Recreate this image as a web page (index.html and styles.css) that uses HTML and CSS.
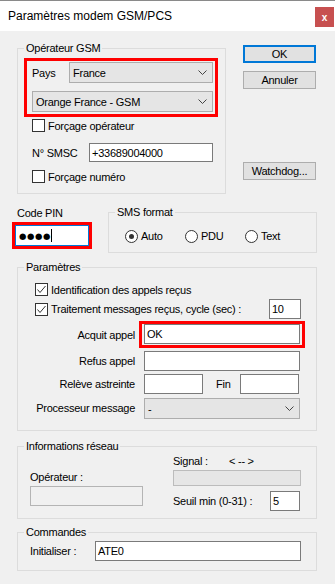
FILE: index.html
```html
<!DOCTYPE html>
<html lang="fr">
<head>
<meta charset="utf-8">
<title>Paramètres modem GSM/PCS</title>
<link rel="stylesheet" href="styles.css">
</head>
<body>
<div class="window">
  <div class="titlebar">
    <span class="title">Paramètres modem GSM/PCS</span>
    <span class="close">x</span>
  </div>
  <div class="content">
    <div class="row1">
      <fieldset class="grp gsm">
        <legend>Opérateur GSM</legend>
        <div class="gbody gsm-body">
          <div class="hl hl-gsm">
            <div class="pays-row">
              <span class="pays-label">Pays</span>
              <div class="select sel-pays"><span>France</span><svg class="chev" width="9" height="5" viewBox="0 0 9 5"><polyline points="0.5,0.5 4.5,4.5 8.5,0.5" fill="none" stroke="#444" stroke-width="1"/></svg></div>
            </div>
            <div class="select sel-op"><span>Orange France - GSM</span><svg class="chev" width="9" height="5" viewBox="0 0 9 5"><polyline points="0.5,0.5 4.5,4.5 8.5,0.5" fill="none" stroke="#444" stroke-width="1"/></svg></div>
          </div>
          <div class="check-row cr-op"><span class="cb"></span><span>Forçage opérateur</span></div>
          <div class="smsc-row"><span class="smsc-label">N° SMSC</span><div class="input in-smsc">+33689004000</div></div>
          <div class="check-row cr-num"><span class="cb"></span><span>Forçage numéro</span></div>
        </div>
      </fieldset>
      <div class="btns">
        <div class="btn btn-ok">OK</div>
        <div class="btn btn-cancel">Annuler</div>
        <div class="btn btn-watch">Watchdog...</div>
      </div>
    </div>

    <div class="row2">
      <div class="pin">
        <div class="pin-label">Code PIN</div>
        <div class="hl hl-pin">
          <div class="pin-input"><span class="dots">●●●●</span><span class="caret"></span></div>
        </div>
      </div>
      <fieldset class="grp sms">
        <legend>SMS format</legend>
        <div class="gbody sms-body">
          <div class="radio"><span class="rb on"></span><span>Auto</span></div>
          <div class="radio"><span class="rb"></span><span>PDU</span></div>
          <div class="radio"><span class="rb"></span><span>Text</span></div>
        </div>
      </fieldset>
    </div>

    <fieldset class="grp params">
      <legend>Paramètres</legend>
      <div class="gbody params-body">
        <div class="check-row cr-id"><span class="cb"><svg width="11" height="11" viewBox="0 0 11 11"><polyline points="1.5,5.5 4,8.5 9.5,2" fill="none" stroke="#333" stroke-width="1"/></svg></span><span>Identification des appels reçus</span></div>
        <div class="check-row cr-trait"><span class="cb"><svg width="11" height="11" viewBox="0 0 11 11"><polyline points="1.5,5.5 4,8.5 9.5,2" fill="none" stroke="#333" stroke-width="1"/></svg></span><span>Traitement messages reçus, cycle (sec) :</span><div class="input in-cycle">10</div></div>
        <div class="form">
          <span class="flabel">Acquit appel</span>
          <div class="hl hl-acq"><div class="input in-wide">OK</div></div>
          <span class="flabel">Refus appel</span>
          <div class="input in-wide in-field"></div>
          <span class="flabel">Relève astreinte</span>
          <div class="releve">
            <div class="input in-small in-field"></div>
            <span class="fin-label">Fin</span>
            <div class="input in-small"></div>
          </div>
          <span class="flabel">Processeur message</span>
          <div class="select sel-proc in-field"><span>-</span><svg class="chev" width="9" height="5" viewBox="0 0 9 5"><polyline points="0.5,0.5 4.5,4.5 8.5,0.5" fill="none" stroke="#444" stroke-width="1"/></svg></div>
        </div>
      </div>
    </fieldset>

    <fieldset class="grp info">
      <legend>Informations réseau</legend>
      <div class="gbody info-body">
        <div class="info-left">
          <div class="info-op-label">Opérateur :</div>
          <div class="disabled-box"></div>
        </div>
        <div class="info-right">
          <div class="signal-row"><span class="signal-label">Signal :</span><span>&lt; -- &gt;</span></div>
          <div class="signal-bar"></div>
          <div class="seuil-row"><span class="seuil-label">Seuil min (0-31) :</span><div class="input in-seuil">5</div></div>
        </div>
      </div>
    </fieldset>

    <fieldset class="grp cmd">
      <legend>Commandes</legend>
      <div class="gbody cmd-body">
        <span class="init-label">Initialiser :</span>
        <div class="input in-init">ATE0</div>
      </div>
    </fieldset>
  </div>
</div>
</body>
</html>
```

FILE: styles.css
```css
* { box-sizing: border-box; }
html, body { margin: 0; padding: 0; }
body {
  width: 335px;
  height: 584px;
  overflow: hidden;
  background: #f0f0f0;
  font-family: "Liberation Sans", Arial, sans-serif;
  font-size: 11px;
  letter-spacing: -0.25px;
  color: #000;
}
.window { width: 335px; height: 584px; background: #f0f0f0; }

.titlebar {
  height: 31px;
  background: #fff;
  border-top: 1px solid #8a8a8a;
  display: flex;
  align-items: center;
  padding-left: 8px;
}
.title { font-size: 12px; letter-spacing: 0; color: #000; }
.close {
  margin-left: auto;
  margin-right: 1px;
  align-self: flex-start;
  width: 19px;
  height: 20px;
  margin-top: 6px;
  background: #c75050;
  color: #fff;
  font-weight: bold;
  font-size: 10px;
  letter-spacing: 0;
  display: flex;
  align-items: center;
  justify-content: center;
}

.content { padding-left: 12px; }

/* group boxes */
.grp {
  margin: 0;
  padding: 0;
  border: 1px solid #dcdcdc;
  min-width: 0;
}
.grp legend {
  padding: 0 2px;
  margin-left: 6px;
  line-height: 14px;
}

.hl { border: 3px solid #f00; }

/* row 1 */
.row1 { display: flex; align-items: flex-start; }
.gsm { margin: 10px 0 0 5px; width: 209px; }
.gsm-body { padding: 3px 0 10px 6px; }
.hl-gsm { width: 194px; padding: 1px 2px 2px 5px; }
.pays-row { display: flex; align-items: center; height: 21px; }
.pays-label { width: 37px; }

.select {
  height: 21px;
  background: #e5e5e5;
  border: 1px solid #adadad;
  display: flex;
  align-items: center;
  padding: 0 5px 0 3px;
}
.select .chev { margin-left: auto; }
.sel-pays { width: 144px; }
.sel-op { width: 181px; margin-top: 8px; }

.check-row { display: flex; align-items: center; gap: 3px; }
.cb {
  width: 13px;
  height: 13px;
  border: 1px solid #333;
  background: #fff;
  display: flex;
  align-items: center;
  justify-content: center;
  flex: none;
}
.cr-op { margin: 2px 0 0 8px; height: 13px; }
.cr-num { margin: 8px 0 0 8px; height: 13px; }

.smsc-row { display: flex; align-items: center; margin: 11px 0 0 8px; height: 19px; }
.smsc-label { width: 57px; }

.input {
  height: 20px;
  background: #fff;
  border: 1px solid #7a7a7a;
  display: flex;
  align-items: center;
  padding-left: 2px;
}
.in-smsc { width: 124px; height: 19px; }

.btns { margin: 14px 0 0 17px; width: 73px; display: flex; flex-direction: column; }
.btn {
  height: 18px;
  background: #e1e1e1;
  border: 1px solid #adadad;
  display: flex;
  align-items: center;
  justify-content: center;
}
.btn-ok { border: 2px solid #0078d7; }
.btn-cancel { margin-top: 8px; }
.btn-watch { margin-top: 73px; }

/* row 2 */
.row2 { display: flex; align-items: flex-start; margin-top: 11px; }
.pin { width: 80px; }
.pin-label { line-height: 14px; margin-top: 1px; padding-left: 5px; }
.hl-pin { margin-top: 2px; width: 80px; height: 27px; }
.pin-input {
  width: 74px;
  height: 21px;
  border: 1px solid #0078d7;
  background: #fff;
  display: flex;
  align-items: center;
  padding-left: 3px;
}
.dots { font-family: "DejaVu Sans", sans-serif; font-size: 8.5px; letter-spacing: 0.6px; }
.caret { width: 1px; height: 13px; background: #000; margin-left: 0; }

.sms { margin-left: 16px; width: 209px; }
.sms-body { display: flex; padding: 10px 0 9px 16px; }
.radio { display: flex; align-items: center; gap: 3px; width: 60px; height: 14px; }
.rb {
  width: 13px;
  height: 13px;
  border: 1px solid #333;
  border-radius: 50%;
  background: #fff;
  display: flex;
  align-items: center;
  justify-content: center;
}
.rb.on::after {
  content: "";
  width: 5px;
  height: 5px;
  border-radius: 50%;
  background: #333;
}

/* params */
.params { margin: 7px 0 0 5px; width: 300px; }
.params-body { padding: 9px 15px 11px 17px; }
.cr-id { height: 13px; }
.cr-trait { margin-top: 3px; height: 20px; }
.in-cycle { width: 32px; margin-left: auto; }

.form {
  display: grid;
  grid-template-columns: 121px auto;
  align-items: center;
  justify-items: start;
  margin-left: -17px;
  margin-top: 2px;
  row-gap: 3px;
}
.flabel { justify-self: end; padding-right: 4px; }
.hl-acq { width: 166px; padding: 0 2px 1px 2px; }
.in-wide { width: 156px; }
.in-field { margin-left: 5px; }
.releve { display: flex; align-items: center; }
.in-small { width: 59px; }
.fin-label { width: 37px; padding-left: 13px; }
.sel-proc { width: 156px; margin-top: 1px; }

/* info */
.info { margin: 8px 0 0 5px; width: 300px; }
.info-body { display: flex; padding: 0 0 7px 12px; }
.info-left { width: 113px; padding-top: 17px; }
.info-op-label { line-height: 14px; }
.disabled-box { margin-top: 2px; height: 20px; border: 1px solid #b4b4b4; background: #f0f0f0; }
.info-right { margin-left: 30px; width: 128px; padding-top: 1px; }
.signal-row { display: flex; line-height: 14px; }
.signal-label { width: 56px; }
.signal-bar { margin-top: 2px; height: 16px; background: #e6e6e6; border: 1px solid #bcbcbc; }
.seuil-row { display: flex; align-items: center; margin-top: 5px; height: 20px; }
.seuil-label { width: 97px; }
.in-seuil { width: 30px; }

/* commandes */
.cmd { margin: 6px 0 0 5px; width: 300px; }
.cmd-body { display: flex; align-items: center; padding: 2px 0 9px 12px; }
.init-label { width: 65px; }
.in-init { width: 206px; }
```
